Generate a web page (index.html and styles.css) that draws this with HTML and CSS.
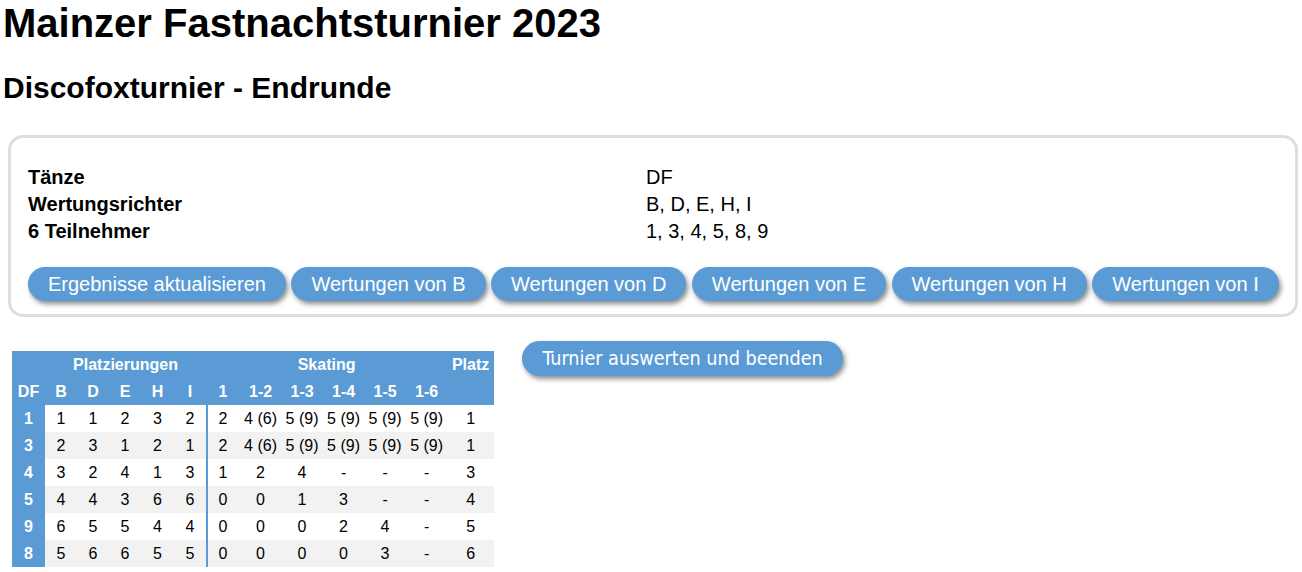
FILE: index.html
```html
<!DOCTYPE html>
<html lang="de">
<head>
<meta charset="utf-8">
<title>Mainzer Fastnachtsturnier 2023</title>
<link rel="stylesheet" href="styles.css">
</head>
<body>
<h1 class="title">Mainzer Fastnachtsturnier 2023</h1>
<h2 class="subtitle">Discofoxturnier - Endrunde</h2>

<section class="infobox">
  <div class="info">
    <div class="label">Tänze</div><div class="value">DF</div>
    <div class="label">Wertungsrichter</div><div class="value">B, D, E, H, I</div>
    <div class="label">6 Teilnehmer</div><div class="value">1, 3, 4, 5, 8, 9</div>
  </div>
  <div class="actions">
    <button class="btn">Ergebnisse aktualisieren</button>
    <button class="btn">Wertungen von B</button>
    <button class="btn">Wertungen von D</button>
    <button class="btn">Wertungen von E</button>
    <button class="btn">Wertungen von H</button>
    <button class="btn">Wertungen von I</button>
  </div>
</section>

<section class="results">
  <table class="scores">
    <colgroup>
      <col class="c33"><col class="c32"><col class="c32"><col class="c32"><col class="c33"><col class="c32">
      <col class="c34"><col class="c41"><col class="c42"><col class="c41"><col class="c42"><col class="c41"><col class="c47">
    </colgroup>
    <thead>
      <tr>
        <th></th>
        <th colspan="5">Platzierungen</th>
        <th colspan="6">Skating</th>
        <th>Platz</th>
      </tr>
      <tr>
        <th>DF</th><th>B</th><th>D</th><th>E</th><th>H</th><th>I</th>
        <th>1</th><th>1-2</th><th>1-3</th><th>1-4</th><th>1-5</th><th>1-6</th><th></th>
      </tr>
    </thead>
    <tbody>
      <tr><th>1</th><td>1</td><td>1</td><td>2</td><td>3</td><td>2</td><td class="sep">2</td><td>4 (6)</td><td>5 (9)</td><td>5 (9)</td><td>5 (9)</td><td>5 (9)</td><td>1</td></tr>
      <tr><th>3</th><td>2</td><td>3</td><td>1</td><td>2</td><td>1</td><td class="sep">2</td><td>4 (6)</td><td>5 (9)</td><td>5 (9)</td><td>5 (9)</td><td>5 (9)</td><td>1</td></tr>
      <tr><th>4</th><td>3</td><td>2</td><td>4</td><td>1</td><td>3</td><td class="sep">1</td><td>2</td><td>4</td><td>-</td><td>-</td><td>-</td><td>3</td></tr>
      <tr><th>5</th><td>4</td><td>4</td><td>3</td><td>6</td><td>6</td><td class="sep">0</td><td>0</td><td>1</td><td>3</td><td>-</td><td>-</td><td>4</td></tr>
      <tr><th>9</th><td>6</td><td>5</td><td>5</td><td>4</td><td>4</td><td class="sep">0</td><td>0</td><td>0</td><td>2</td><td>4</td><td>-</td><td>5</td></tr>
      <tr><th>8</th><td>5</td><td>6</td><td>6</td><td>5</td><td>5</td><td class="sep">0</td><td>0</td><td>0</td><td>0</td><td>3</td><td>-</td><td>6</td></tr>
    </tbody>
  </table>
  <button class="btn btn-finish">Turnier auswerten und beenden</button>
</section>
</body>
</html>
```

FILE: styles.css
```css
html, body {
  margin: 0;
  padding: 0;
  background: #ffffff;
  color: #000000;
  font-family: "Liberation Sans", Arial, sans-serif;
}

.title {
  margin: 0;
  padding-left: 3px;
  font-size: 40px;
  line-height: 46px;
  font-weight: bold;
}

.subtitle {
  margin: 25px 0 0;
  padding-left: 3px;
  font-size: 30px;
  line-height: 34px;
  font-weight: bold;
}

.infobox {
  margin: 30px 4px 0 8px;
  border: 3px solid #dddddd;
  border-radius: 15px;
  padding: 26px 17px 13px;
}

.info {
  display: grid;
  grid-template-columns: 618px 1fr;
  font-size: 20px;
  line-height: 27px;
}

.label {
  font-weight: bold;
}

.actions {
  display: flex;
  gap: 5.5px;
  margin-top: 22px;
}

.btn {
  font-family: "Liberation Sans", Arial, sans-serif;
  font-size: 20px;
  line-height: 34px;
  height: 34px;
  padding: 0 20px;
  border: none;
  border-radius: 17px;
  background: #5b9bd5;
  color: #ffffff;
  box-shadow: 2px 3px 5px rgba(0, 0, 0, 0.45);
  white-space: nowrap;
  cursor: pointer;
}

.results {
  display: flex;
  align-items: flex-start;
  gap: 28px;
  margin-top: 24px;
  padding-left: 12px;
}

.btn-finish {
  font-family: "DejaVu Sans Condensed", "DejaVu Sans", sans-serif;
  font-stretch: condensed;
  font-size: 19.6px;
  height: 35px;
  line-height: 36px;
  border-radius: 18px;
  width: 321px;
  padding: 0;
}

.scores {
  margin-top: 10px;
  border-collapse: collapse;
  border-spacing: 0;
  table-layout: fixed;
  width: 482px;
  font-size: 16px;
}

.c32 { width: 32px; }
.c33 { width: 33px; }
.c34 { width: 34px; }
.c41 { width: 41px; }
.c42 { width: 42px; }
.c47 { width: 47px; }

.scores th,
.scores td {
  height: 27px;
  padding: 0;
  text-align: center;
  white-space: nowrap;
}

.scores thead th {
  background: #5b9bd5;
  color: #ffffff;
  font-weight: bold;
}

.scores tbody th {
  background: #5b9bd5;
  color: #ffffff;
  font-weight: bold;
}

.scores tbody tr:nth-child(even) td {
  background: #f2f2f2;
}

.scores td.sep {
  box-shadow: inset 2px 0 0 #5b9bd5;
}
```
